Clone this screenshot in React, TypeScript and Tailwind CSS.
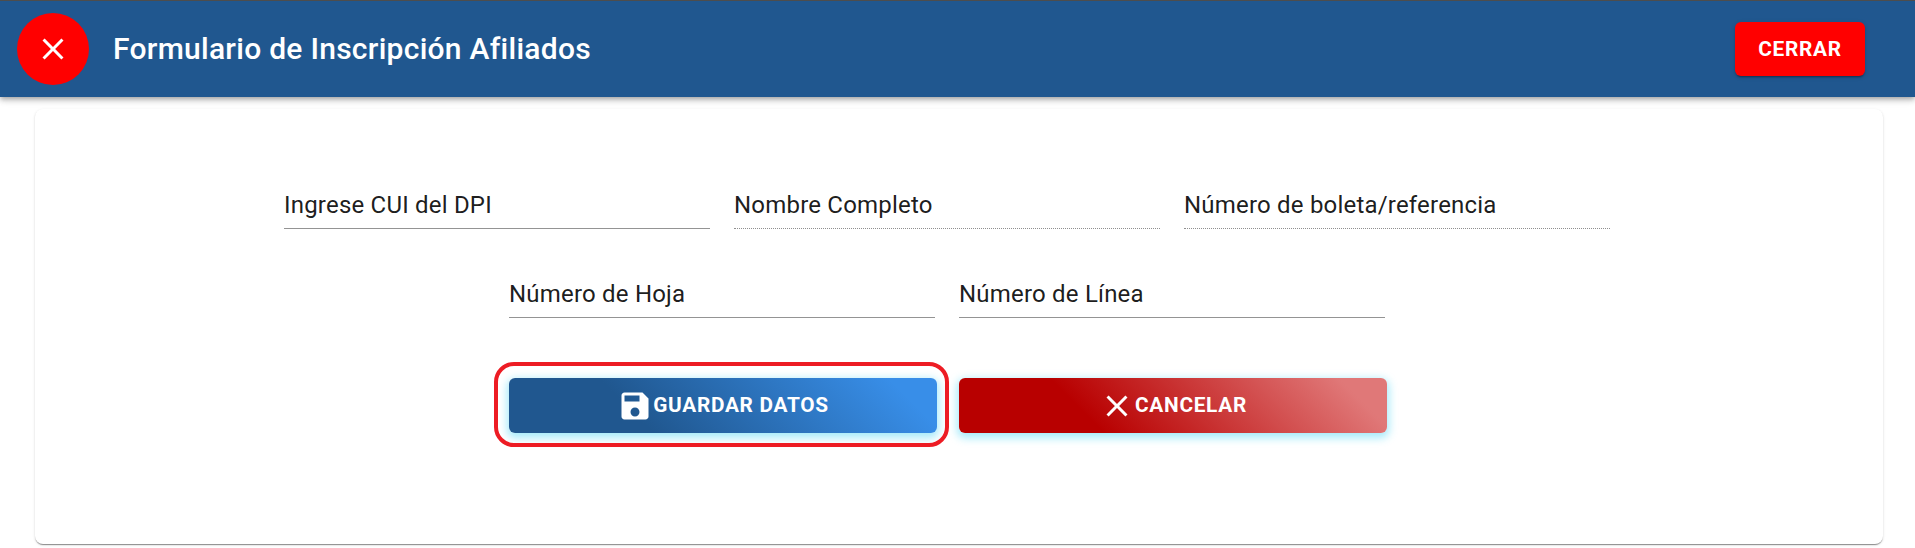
function SaveIcon() {
  return (
    <svg viewBox="0 0 24 24" className="w-9 h-9 fill-white shrink-0">
      <path d="M17 3H5c-1.11 0-2 .9-2 2v14c0 1.1.89 2 2 2h14c1.1 0 2-.9 2-2V7l-4-4zm-5 16c-1.66 0-3-1.34-3-3s1.34-3 3-3 3 1.34 3 3-1.34 3-3 3zm3-10H5V5h10v4z" />
    </svg>
  );
}

function CloseIcon() {
  return (
    <svg viewBox="0 0 24 24" className="w-9 h-9 fill-white shrink-0">
      <path d="M19 6.41 17.59 5 12 10.59 6.41 5 5 6.41 10.59 12 5 17.59 6.41 19 12 13.41 17.59 19 19 17.59 13.41 12z" />
    </svg>
  );
}

function Field({ label, dotted }: { label: string; dotted?: boolean }) {
  return (
    <label
      className={
        "flex items-center w-[426px] h-[48px] text-[24px] tracking-[0.2px] text-[#000000e6] border-b " +
        (dotted ? "border-dotted border-[#00000070]" : "border-[#0000006b]")
      }
    >
      {label}
    </label>
  );
}

export default function App() {
  return (
    <div className="w-[1915px] h-[548px] overflow-hidden bg-white font-['Roboto',sans-serif]">
      <header className="h-[97px] flex items-center justify-between bg-[#20578f] border-t border-[#4d4d4d] pl-[17px] pr-[50px] shadow-[0_2px_4px_-1px_rgba(0,0,0,0.2),0_4px_5px_0_rgba(0,0,0,0.14),0_1px_10px_0_rgba(0,0,0,0.12)] relative">
        <div className="flex items-center gap-6">
          <div className="w-[72px] h-[72px] rounded-full bg-[#ff0000] flex items-center justify-center">
            <CloseIcon />
          </div>
          <h1 className="text-[30px] font-medium text-white tracking-[0.27px] pb-[2px]">Formulario de Inscripción Afiliados</h1>
        </div>
        <button className="w-[130px] h-[54px] pt-[2px] rounded-md bg-[#ff0000] text-white text-[20.8px] font-bold tracking-[0.7px] shadow-[0_3px_1px_-2px_rgba(0,0,0,0.2),0_2px_2px_0_rgba(0,0,0,0.14),0_1px_5px_0_rgba(0,0,0,0.12)]">
          CERRAR
        </button>
      </header>

      <main className="ml-[35px] mt-3 w-[1848px] h-[435px] rounded-lg bg-white shadow-[0_2px_1px_-1px_rgba(0,0,0,0.3),0_1px_1px_0_rgba(0,0,0,0.14),0_1px_3px_0_rgba(0,0,0,0.12)] pt-[72px] pr-6 flex flex-col items-center">
        <div className="flex gap-6">
          <Field label="Ingrese CUI del DPI" />
          <Field label="Nombre Completo" dotted />
          <Field label="Número de boleta/referencia" dotted />
        </div>
        <div className="flex gap-6 mt-[41px]">
          <Field label="Número de Hoja" />
          <Field label="Número de Línea" />
        </div>
        <div className="flex gap-[22px] mt-[60px] ml-[2px]">
          <div className="relative">
            <button className="w-[428px] h-[55px] rounded-md flex items-center justify-center text-white text-[20.8px] font-bold tracking-[0.7px] bg-[linear-gradient(45deg,#20578f_30%,#388ee8_90%)] shadow-[0_3px_8px_2px_rgba(33,203,243,0.4)]">
              <SaveIcon />
              GUARDAR DATOS
            </button>
            <div className="absolute -left-[15px] -right-[12px] -top-4 -bottom-[14px] border-4 border-[#ed1c24] rounded-[20px] pointer-events-none" />
          </div>
          <button className="w-[428px] h-[55px] rounded-md flex items-center justify-center text-white text-[20.8px] font-bold tracking-[0.7px] bg-[linear-gradient(45deg,#b80000_30%,#e07878_90%)] shadow-[0_3px_8px_2px_rgba(33,203,243,0.4)]">
            <CloseIcon />
            CANCELAR
          </button>
        </div>
      </main>
    </div>
  );
}
